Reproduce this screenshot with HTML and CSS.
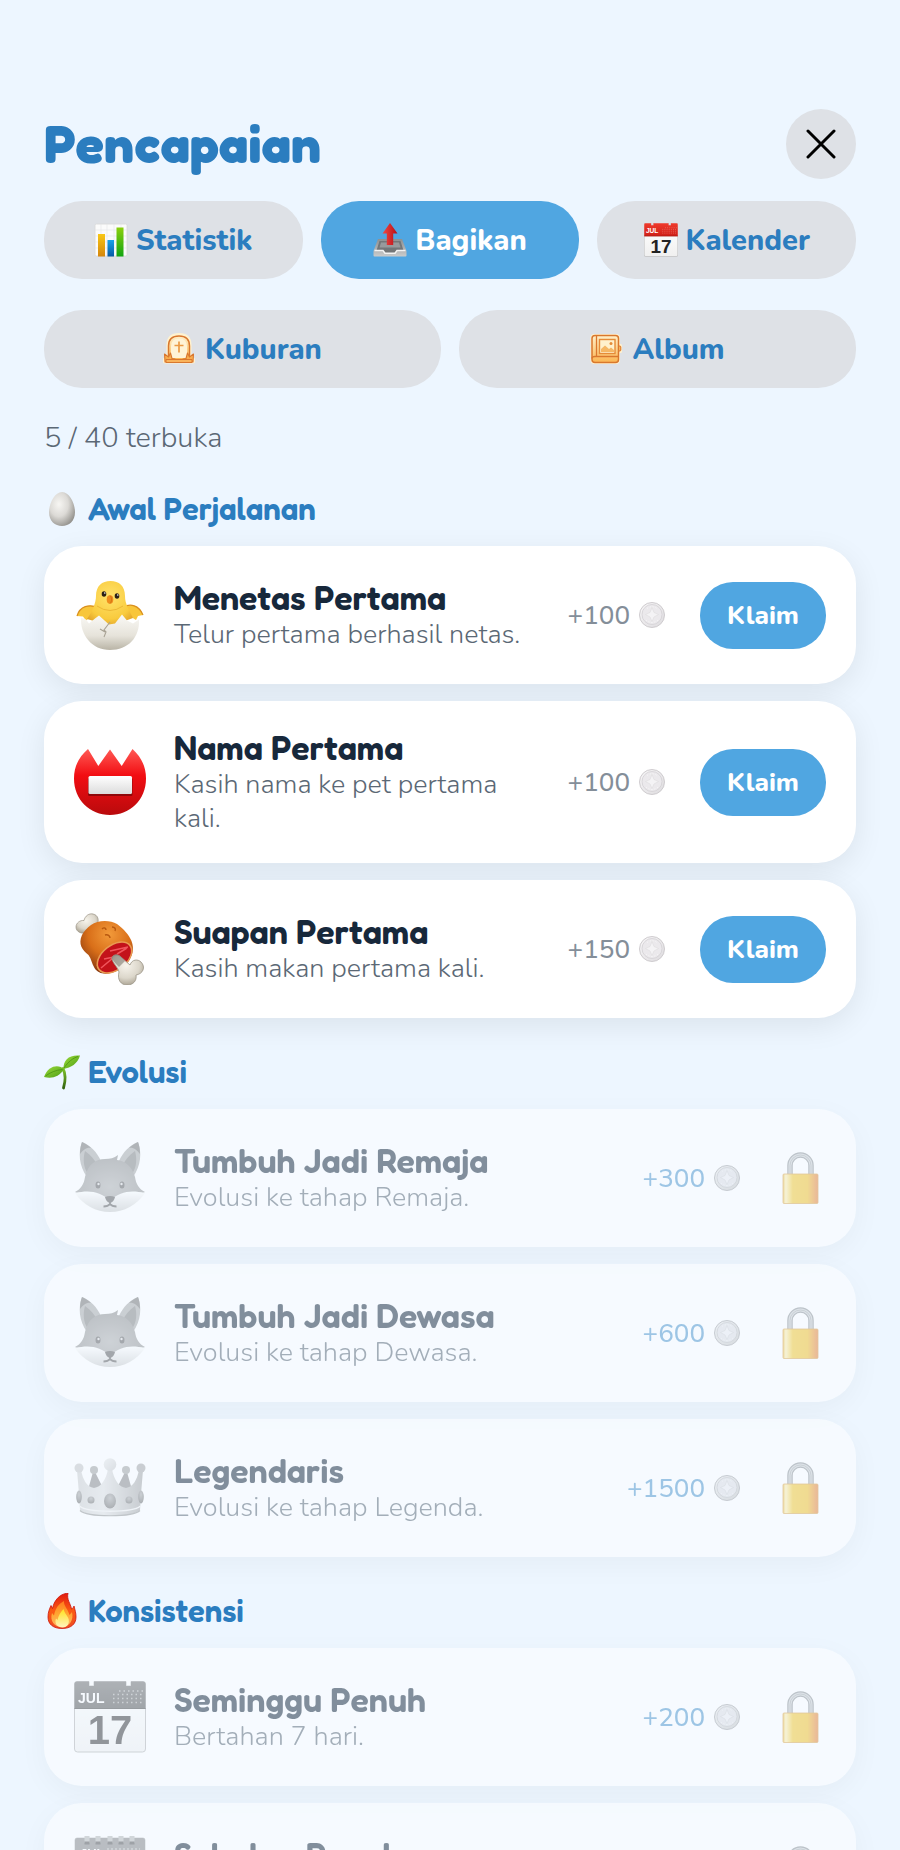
FILE: index.html
```html
<!DOCTYPE html>
<html lang="id">
<head>
<meta charset="utf-8">
<meta name="viewport" content="width=device-width, initial-scale=1">
<title>Pencapaian</title>
<link rel="stylesheet" href="styles.css">
</head>
<body>
<svg class="sprite" aria-hidden="true">
  <defs>
    <linearGradient id="gBarY" x1="0" y1="0" x2="0" y2="1"><stop offset="0" stop-color="#f8c715"/><stop offset="1" stop-color="#d5860d"/></linearGradient>
    <linearGradient id="gBarB" x1="0" y1="0" x2="0" y2="1"><stop offset="0" stop-color="#17a3ea"/><stop offset="1" stop-color="#0759a4"/></linearGradient>
    <linearGradient id="gBarG" x1="0" y1="0" x2="0" y2="1"><stop offset="0" stop-color="#8bd00c"/><stop offset="1" stop-color="#12a512"/></linearGradient>
    <linearGradient id="gArrow" x1="0" y1="0" x2="1" y2="0"><stop offset="0" stop-color="#f04a45"/><stop offset="1" stop-color="#b80d14"/></linearGradient>
    <linearGradient id="gTray" x1="0" y1="0" x2="0" y2="1"><stop offset="0" stop-color="#8d8f90"/><stop offset="1" stop-color="#c9cbcc"/></linearGradient>
    <linearGradient id="gRedTop" x1="0" y1="0" x2="0" y2="1"><stop offset="0" stop-color="#f03a2c"/><stop offset="1" stop-color="#cf1f17"/></linearGradient>
    <linearGradient id="gPaper" x1="0" y1="0" x2="0" y2="1"><stop offset="0" stop-color="#ffffff"/><stop offset="1" stop-color="#f0f0f0"/></linearGradient>
    <linearGradient id="gAmber" x1="0" y1="0" x2="0" y2="1"><stop offset="0" stop-color="#fff0c9"/><stop offset="1" stop-color="#fbb552"/></linearGradient>
    <radialGradient id="gEgg" cx=".38" cy=".36" r=".72"><stop offset="0" stop-color="#f7f6f3"/><stop offset=".5" stop-color="#dcdad6"/><stop offset="1" stop-color="#8f8d88"/></radialGradient>
    <radialGradient id="gChick" cx=".5" cy=".35" r=".7"><stop offset="0" stop-color="#ffe26a"/><stop offset=".7" stop-color="#f9cb3e"/><stop offset="1" stop-color="#e0a028"/></radialGradient>
    <linearGradient id="gShell" x1="0" y1="0" x2="0" y2="1"><stop offset="0" stop-color="#faf9f6"/><stop offset=".6" stop-color="#e6e3da"/><stop offset="1" stop-color="#b9b4a6"/></linearGradient>
    <linearGradient id="gBadge" x1="0" y1="0" x2="0" y2="1"><stop offset="0" stop-color="#ff5a55"/><stop offset=".4" stop-color="#f20d12"/><stop offset="1" stop-color="#b90a0c"/></linearGradient>
    <linearGradient id="gPlate" x1="0" y1="0" x2="0" y2="1"><stop offset="0" stop-color="#ffffff"/><stop offset="1" stop-color="#dcdcdc"/></linearGradient>
    <radialGradient id="gMeat" cx=".55" cy=".25" r=".8"><stop offset="0" stop-color="#f29a3a"/><stop offset=".5" stop-color="#d96f19"/><stop offset="1" stop-color="#7c2f0c"/></radialGradient>
    <radialGradient id="gBone" cx=".45" cy=".35" r=".7"><stop offset="0" stop-color="#f7f4ec"/><stop offset=".6" stop-color="#dcd7cb"/><stop offset="1" stop-color="#a59d8c"/></radialGradient>
    <linearGradient id="gLeaf" x1="0" y1="0" x2="1" y2="1"><stop offset="0" stop-color="#9bdc3a"/><stop offset="1" stop-color="#4c9c14"/></linearGradient>
    <linearGradient id="gStem" x1="0" y1="0" x2="0" y2="1"><stop offset="0" stop-color="#7fc32b"/><stop offset="1" stop-color="#34640f"/></linearGradient>
    <linearGradient id="gFlame" x1="0" y1="0" x2="0" y2="1"><stop offset="0" stop-color="#e01a10"/><stop offset=".5" stop-color="#fb5a12"/><stop offset="1" stop-color="#ee4d22"/></linearGradient>
    <linearGradient id="gFlameIn" x1="0" y1="0" x2="0" y2="1"><stop offset="0" stop-color="#ff7a1c"/><stop offset=".5" stop-color="#ffa631"/><stop offset="1" stop-color="#ffb765"/></linearGradient>
    <linearGradient id="gFlameCore" x1="0" y1="0" x2="0" y2="1"><stop offset="0" stop-color="#ffe21c"/><stop offset="1" stop-color="#fff3c0"/></linearGradient>
    <radialGradient id="gFox" cx=".5" cy=".6" r=".6"><stop offset="0" stop-color="#a8a8a8"/><stop offset="1" stop-color="#808080"/></radialGradient>
    <linearGradient id="gFoxLow" x1="0" y1="0" x2="0" y2="1"><stop offset="0" stop-color="#ffffff"/><stop offset="1" stop-color="#c6c6c6"/></linearGradient>
    <linearGradient id="gCrown" x1="0" y1="0" x2="1" y2="0"><stop offset="0" stop-color="#c9c9c9"/><stop offset=".4" stop-color="#dedede"/><stop offset="1" stop-color="#9b9b9b"/></linearGradient>
    <radialGradient id="gGem" cx=".5" cy=".3" r=".7"><stop offset="0" stop-color="#a4a4a4"/><stop offset="1" stop-color="#5b5b5b"/></radialGradient>
    <linearGradient id="gGold" x1="0" y1="0" x2="1" y2="0"><stop offset="0" stop-color="#f0c040"/><stop offset=".08" stop-color="#fff0b0"/><stop offset=".28" stop-color="#f4c82c"/><stop offset=".7" stop-color="#f3c126"/><stop offset="1" stop-color="#e87834"/></linearGradient>
    <linearGradient id="gCoin" x1="0" y1="0" x2="1" y2="1"><stop offset="0" stop-color="#f9f8f9"/><stop offset="1" stop-color="#dddbde"/></linearGradient>
    <linearGradient id="gCoinDark" x1="0" y1="0" x2="1" y2="1"><stop offset="0" stop-color="#ebebeb"/><stop offset="1" stop-color="#c2c2c2"/></linearGradient>
  </defs>

  <symbol id="i-chart" viewBox="0 0 34 34">
    <rect x="1" y="1" width="32" height="32" rx="1.500" fill="#fbfbfb" stroke="#d8d8d8" stroke-width=".8"/>
    <path d="M1 7h32M1 13h32M1 19h32M1 25h32M7 1v32M13 1v32M20 1v32M27 1v32" stroke="#e4e6e8" stroke-width=".6"/>
    <rect x="4" y="11" width="7" height="22.500" fill="url(#gBarY)"/>
    <rect x="13.500" y="17" width="6.500" height="16.500" fill="url(#gBarB)"/>
    <rect x="22.500" y="4.500" width="7" height="29" fill="url(#gBarG)"/>
  </symbol>

  <symbol id="i-share" viewBox="0 0 34 34">
    <path d="M5 16h24l4.500 12v4.500q0 1-1 1h-31q-1 0-1-1V28z" fill="url(#gTray)"/>
    <path d="M6.500 18h21l3 9.500h-6.500l-2 2.500h-10l-2-2.500H3.500z" fill="#737678"/>
    <path d="M8 19.500h18l1.500 5H6.500z" fill="#979a9c"/>
    <path d="M1.500 27.500h8.500l2 2.700h10l2-2.700h8.500" fill="none" stroke="#f3f4f4" stroke-width="1.500"/>
    <path d="M17 0l7.500 10.500h-4.300V22h-6.400V10.500H9.500z" fill="url(#gArrow)"/>
  </symbol>

  <symbol id="i-calendar" viewBox="0 0 72 72">
    <path d="M3 .5h12v4.500h5V.5h32v4.500h5V.5h12q2.500 0 2.500 2.500v65q0 3-3 3H3.500q-3 0-3-3V3Q.5.5 3 .5z" fill="url(#gPaper)" stroke="#aaa" stroke-width="1"/>
    <path d="M3 .5h12v4.500h5V.5h32v4.500h5V.5h12q2.500 0 2.500 2.500v25H.5V3Q.5.5 3 .5z" fill="url(#gRedTop)"/>
    <path d="M.5 27.500h71" stroke="#8f1712" stroke-width="1"/>
    <path d="M39 13.500h30M39 17.500h30M39 21.500h30M45 10h24" stroke="#fff" stroke-opacity=".5" stroke-width="1.300" stroke-dasharray="1.500 3"/>
    <text x="4" y="22" font-family="Liberation Sans, sans-serif" font-size="14" font-weight="700" fill="#fff">JUL</text>
    <text x="36" y="63" text-anchor="middle" font-family="Liberation Sans, sans-serif" font-size="40" font-weight="700" fill="#222">17</text>
  </symbol>

  <symbol id="i-grave" viewBox="0 0 32 32">
    <path d="M6 28V12q0-9.500 10-9.500T26 12v16" fill="none" stroke="#fff2cf" stroke-width="5"/>
    <path d="M2.500 27.500h27" stroke="#fff2cf" stroke-width="6" stroke-linecap="round"/>
    <path d="M5.500 27V13Q5.500 3 16 3t10.500 10v14z" fill="url(#gAmber)" stroke="#d9772e" stroke-width="1.500"/>
    <path d="M8 25V13.500Q8 5.500 16 5.500t8 8V25" fill="#fff3d6"/>
    <path d="M16 8.500v11M11.500 12.500h9" stroke="#eb9a45" stroke-width="1.700"/>
    <path d="M2 29l-.5-8 4 3 2-4 1.500 5.500 3 .5-1 3zM30 29l.5-8-4 3-2-4-1.500 5.500-3 .5 1 3z" fill="#f9ad4e" stroke="#d9772e" stroke-width="1.100" stroke-linejoin="round"/>
    <path d="M3 26.500h26v3H3z" fill="#f9b25a" stroke="#d9772e" stroke-width="1"/>
  </symbol>

  <symbol id="i-album" viewBox="0 0 32 32">
    <rect x=".5" y="1" width="29.500" height="30" rx="4" fill="#fff2cf"/>
    <rect x="28" y="11" width="4" height="9" rx="1.500" fill="#fff2cf"/>
    <path d="M5 2.500h20.500q3 0 3 3v21q0 3-3 3H5q-3 0-3-3v-21q0-3 3-3z" fill="url(#gAmber)" stroke="#d9772e" stroke-width="1.500"/>
    <path d="M6.500 3v20.500M2 25.500q0-2 3-2h23.500" fill="none" stroke="#d9772e" stroke-width="1.300"/>
    <rect x="9.500" y="6.500" width="15.500" height="14" fill="#fff1cd" stroke="#e58b38" stroke-width="1.400"/>
    <path d="M11 19v-3l4-3.500 4 3.500 2-1.500 3 2.500v2z" fill="#f5b765"/>
    <circle cx="21" cy="10.500" r="1.500" fill="#e58b38"/>
    <rect x="28.500" y="13" width="2.300" height="5" rx="1" fill="#f9b25a" stroke="#d9772e"/>
  </symbol>

  <symbol id="i-egg" viewBox="0 0 36 36">
    <path d="M18 1C25.500 1 31 13 31 21c0 9-6 14-13 14S5 30 5 21C5 13 10.500 1 18 1z" fill="url(#gEgg)"/>
  </symbol>

  <symbol id="i-sprout" viewBox="0 0 36 36">
    <path d="M19 14.500c2.500 5 3 11 .5 19.500" fill="none" stroke="url(#gStem)" stroke-width="2.800" stroke-linecap="round"/>
    <path d="M19.500 15C19 6 25 .5 36 1.500 33.500 10 27 13.500 19.500 15z" fill="url(#gLeaf)"/>
    <path d="M20 15C15 10 4 11 0 23c8 2 15 0 20-8z" fill="url(#gLeaf)"/>
    <path d="M20 14C24 8 29 4 34 2.500M18.500 15.500C12 16 6 18.500 1.500 22" fill="none" stroke="#4a9312" stroke-width=".8"/>
  </symbol>

  <symbol id="i-flame" viewBox="0 0 36 36">
    <path d="M24 0c-1.500 7 2.500 10 3.500 16 1.500-.5 2-2 2.500-3C31 17 32 20 32 24c0 7.500-5.500 11.500-14 11.500S4 31.500 4 24c0-5 1.500-8 3-11.500.7 1 1 2 1.500 3C10 8 15 1 24 0z" fill="url(#gFlame)" stroke="#cc140c" stroke-width=".8"/>
    <path d="M20 8c-.5 5 4 8 5.500 14l2.500-3c2 8-2.500 15-10 15S5.500 28 8 20l2 2.500C11.500 15 14.500 11 20 8z" fill="url(#gFlameIn)"/>
    <path d="M19.500 16c1 4 2.500 5 4.500 8.500 2.500 5-.5 10-5.500 10s-8.500-4-6.500-9c.6.500 1 1 1.500 1.500 1-5 3-7.500 6-11z" fill="url(#gFlameCore)"/>
  </symbol>

  <symbol id="i-chick" viewBox="0 0 72 72">
    <path d="M25 29C16 24 6 27 3 37l6 .5 3 4 4-3h42l4 2.500 2-4 5-1C66 26 57 24 48 29z" fill="#f8c63a"/>
    <path d="M3 37C6 27 15 25 24 28.500M69 36C65 26 56 24 49 28.500" fill="none" stroke="#d98f1e" stroke-width="1.200"/>
    <path d="M22 17C22 7 28 2 36.500 2S51 7 51 17c0 8 4 14 8 22l-22 8-24-7c5-7 9-16 9-23z" fill="url(#gChick)"/>
    <path d="M23 27q13 9 26 0" fill="none" stroke="#e5ab2b" stroke-width="1" opacity=".7"/>
    <path d="M7 38.500l5 2 3 4 6-5 4-3 10 9 6-1 7-9 5 6 6 3 6-4c1 18-11 30.500-29 30.500S6 56 7 38.500z" fill="url(#gShell)"/>
    <path d="M36 43l-6 8 2 2-2 5M31 53l-5-3" fill="none" stroke="#a8a294" stroke-width="1.100"/>
    <ellipse cx="30" cy="15" rx="2.300" ry="2.800" fill="#2b2016"/><ellipse cx="43" cy="17" rx="2.300" ry="2.800" fill="#2b2016"/>
    <circle cx="30.800" cy="14" r=".8" fill="#fff"/><circle cx="43.800" cy="16" r=".8" fill="#fff"/>
    <ellipse cx="36" cy="20.500" rx="3.300" ry="4.200" fill="#ef8d1c"/><path d="M36 16.500c2 2 2 6 0 8" fill="none" stroke="#c86810" stroke-width=".8"/>
  </symbol>

  <symbol id="i-badge" viewBox="0 0 72 72">
    <path d="M14 3l10.300 17L36 3.500 47.700 20 58.500 3C67 11 72 20 72 32.500 72 54 56 69 36 69S0 54 0 32.500C0 20 5 11 14 3z" fill="url(#gBadge)"/>
    <rect x="14" y="32" width="44.500" height="18" rx="1.500" fill="#8f0709"/>
    <rect x="14.500" y="30" width="43.500" height="18" rx="1.500" fill="url(#gPlate)"/>
  </symbol>

  <symbol id="i-meat" viewBox="0 0 72 72">
    <path d="M2 14c0-4 4-7 8-6.500C11 3 15 0 19 1c5 1 6.500 6 4 11l-8 7C8 22 2 19 2 14z" fill="url(#gBone)" stroke="#9b9486" stroke-width=".7"/>
    <path d="M17 12C24 7 36 7 43 11c7 5 12 11 14.500 17 3 8 1 15-3.500 21-4 6-10 9-17 11-7 1.500-13 .5-16.500-5-3-5-3-9-6-13C8 37 4 31 8 22c2-4 5-7 9-10z" fill="url(#gMeat)"/>
    <ellipse cx="40.500" cy="44.500" rx="20.500" ry="13" transform="rotate(-38 40.500 44.500)" fill="#e99a52"/>
    <ellipse cx="40.500" cy="44.500" rx="18.800" ry="11.500" transform="rotate(-38 40.500 44.500)" fill="#c3121a"/>
    <path d="M27 55l12-10M30 46l10-2M36 38l18-4M43 41l10-6" stroke="#f0555c" stroke-width="1.600" fill="none"/>
    <path d="M28 16c2-2 4-1 4 1M38 14c3 0 4 2 3 4M31 22c3-1 5 1 5 3" fill="none" stroke="#b8580f" stroke-width="1.400"/>
    <path d="M38 45c1-4 6-4 9-1l9 8c2-6 8-6 11-3 5 5 2 12-5 13 1 6-3 10-9 10s-10-5-8-13c-1-5-7-9-7-14z" fill="url(#gBone)" stroke="#9b9486" stroke-width=".8"/>
    <path d="M38 45c1-4 6-4 9-1l4 4-6 6c-3-3-6-6-7-9z" fill="#5d5850" opacity=".45"/>
  </symbol>

  <symbol id="i-fox" viewBox="0 0 72 72">
    <path d="M8 0C16 3 23 10 27 19L13 35C5 24 4 10 8 0zM64 0C56 3 49 10 45 19l14 16C67 24 68 10 64 0z" fill="#a0a0a0"/>
    <path d="M8 0c4 2 7 4 9 6-4-1-8 2-11 6C6 8 6.500 4 8 0zM64 0c-4 2-7 4-9 6 4-1 8 2 11 6 0-4-.5-8-2-12z" fill="#666"/>
    <path d="M11 9c6 4 10 9 12 14l-9 9C9 25 9 16 11 9zM61 9c-6 4-10 9-12 14l9 9c5-7 5-16 3-23z" fill="#767676"/>
    <path d="M11 35C14 22 22 17 31 17c5 0 9-1 13-4l-1 5C52 19 58 25 61 35c1 7 4 12 10 15L36 66 1 50c6-3 9-8 10-15z" fill="url(#gFox)"/>
    <path d="M1 51c14-3 25-2 35 8 10-10 21-11 35-8C63 63 50 70 36 70S9 63 1 51z" fill="url(#gFoxLow)"/>
    <ellipse cx="24" cy="43" rx="2.500" ry="3.500" fill="#4c4c4c"/><ellipse cx="48" cy="43" rx="2.500" ry="3.500" fill="#4c4c4c"/>
    <circle cx="24.500" cy="42" r="1.200" fill="#ddd"/><circle cx="47.500" cy="42" r="1.200" fill="#ddd"/>
    <path d="M31 55q5-2 10 0-1 5-5 6-4-1-5-6z" fill="#484848"/>
    <path d="M36 60v2q-2 2.500-6.500 2.500M36 62q2 2.500 6.500 2.500" fill="none" stroke="#484848" stroke-width="1.800"/>
  </symbol>

  <symbol id="i-crown" viewBox="0 0 72 72">
    <path d="M14 38l5-18h2l7 14-8 8zM58 38l-5-18h-2l-7 14 8 8z" fill="#7c7c7c"/>
    <path d="M3 18h4c2 10 6 17 13 18 7-1 12-8 14-19h4c2 11 7 18 14 19 7-1 11-8 13-18h4l-2 24-1 16c-7 8-53 8-60 0L5 42z" fill="url(#gCrown)"/>
    <path d="M5.500 54c8 7 53 7 61 0" fill="none" stroke="#f0f0f0" stroke-width="1.500"/>
    <path d="M6 58.500c7 7 53 7 60 0" fill="none" stroke="#8a8a8a" stroke-width="1.200"/>
    <circle cx="5" cy="16" r="4.500" fill="#c0c0c0"/><circle cx="67" cy="16" r="4.500" fill="#9d9d9d"/>
    <circle cx="20" cy="18" r="4" fill="#979797"/><circle cx="52" cy="18" r="4" fill="#979797"/>
    <circle cx="36" cy="12.500" r="6.300" fill="url(#gCoinDark)"/>
    <ellipse cx="36" cy="49" rx="6" ry="7.500" fill="url(#gGem)"/>
    <circle cx="17" cy="48" r="3.500" fill="url(#gGem)"/><circle cx="55" cy="48" r="3.500" fill="url(#gGem)"/>
    <ellipse cx="5" cy="45" rx="2.800" ry="6.500" fill="url(#gGem)"/><ellipse cx="67" cy="45" rx="2.800" ry="6.500" fill="url(#gGem)"/>
  </symbol>

  <symbol id="i-spiral" viewBox="0 0 72 72">
    <rect x="1" y="2" width="70" height="69" rx="2" fill="url(#gPaper)" stroke="#bbb"/>
    <path d="M3 2h66q2 0 2 2v22H1V4q0-2 2-2z" fill="#7a7a7a"/>
    <path d="M13 0v7M24 0v7M36 0v7M47 0v7M58 0v7" stroke="#b0b0b0" stroke-width="5"/>
    <path d="M10.500 7h5M21.500 7h5M33.500 7h5M44.500 7h5M55.500 7h5" stroke="#3f3f3f" stroke-width="3"/>
    <path d="M33 13h33M33 17h33M33 21h33" stroke="#ccc" stroke-width="1.200" stroke-dasharray="2 2"/>
    <text x="6" y="22" font-family="Liberation Sans, sans-serif" font-size="13" font-weight="700" fill="#fff">JUL</text>
  </symbol>

  <symbol id="i-coin" viewBox="0 0 26 26">
    <circle cx="13" cy="13" r="12.500" fill="url(#gCoin)" stroke="#c9c6ca" stroke-width=".9"/>
    <circle cx="13" cy="12.500" r="10" fill="#ebe9ec" stroke="#d3d0d4" stroke-width=".8"/>
    <path d="M13 5.500l2 5 4.500 2-4.500 2.500-2 4.500-2-4.500L6.500 12.500l4.500-2z" fill="#f4f3f5" stroke="#dddbde" stroke-width=".6"/>
    <path d="M8 6.500q5-3.500 10 0M7 18q6 5 12 0" fill="none" stroke="#fbfbfb" stroke-width="1" stroke-dasharray="1 2"/>
  </symbol>

  <symbol id="i-coin-dark" viewBox="0 0 26 26">
    <circle cx="13" cy="13" r="12.500" fill="url(#gCoinDark)" stroke="#a2a2a6" stroke-width="1"/>
    <circle cx="13" cy="12.500" r="10" fill="#dedee2" stroke="#b6b6ba" stroke-width=".8"/>
    <path d="M13 5.500l2 5 4.500 2-4.500 2.500-2 4.500-2-4.500L6.500 12.500l4.500-2z" fill="#ececf0" stroke="#c6c6ca" stroke-width=".6"/>
    <path d="M8 6.500q5-3.500 10 0M7 18q6 5 12 0" fill="none" stroke="#f4f4f4" stroke-width="1" stroke-dasharray="1 2"/>
  </symbol>

  <symbol id="i-lock" viewBox="0 0 36 52">
    <path d="M7.500 24V13.500a10.500 10.500 0 0 1 21 0V24" fill="none" stroke="#8e9296" stroke-width="5.500"/>
    <path d="M7.500 24V13.500a10.500 10.500 0 0 1 21 0V24" fill="none" stroke="#cdd0d2" stroke-width="3"/>
    <path d="M7.500 24V13.500a10.500 10.500 0 0 1 21 0V24" fill="none" stroke="#9fa3a6" stroke-width=".8"/>
    <rect x=".5" y="22" width="35" height="29.500" rx="1" fill="url(#gGold)" stroke="#d59a3c" stroke-width=".8"/>
  </symbol>
</svg>

<main class="screen">
  <header class="header">
    <h1 class="title">Pencapaian</h1>
    <button class="close" type="button" aria-label="Tutup">
      <svg class="close-icon" viewBox="0 0 30 30" aria-hidden="true"><path d="M2 2l26 26M28 2L2 28"/></svg>
    </button>
  </header>

  <nav class="tabs" aria-label="Menu pencapaian">
    <div class="tab-row">
      <button class="tab" type="button"><svg class="tab-icon" aria-hidden="true"><use href="#i-chart"/></svg>Statistik</button>
      <button class="tab tab-active" type="button"><svg class="tab-icon" aria-hidden="true"><use href="#i-share"/></svg>Bagikan</button>
      <button class="tab" type="button"><svg class="tab-icon" aria-hidden="true"><use href="#i-calendar"/></svg>Kalender</button>
    </div>
    <div class="tab-row">
      <button class="tab tab-wide" type="button"><svg class="tab-icon" aria-hidden="true"><use href="#i-grave"/></svg>Kuburan</button>
      <button class="tab tab-wide" type="button"><svg class="tab-icon" aria-hidden="true"><use href="#i-album"/></svg>Album</button>
    </div>
  </nav>

  <p class="progress">5 / 40 terbuka</p>

  <section class="group">
    <h2 class="group-title"><svg class="group-icon" aria-hidden="true"><use href="#i-egg"/></svg>Awal Perjalanan</h2>
    <ul class="cards">
      <li class="card">
        <svg class="card-icon" aria-hidden="true"><use href="#i-chick"/></svg>
        <div class="card-text"><h3 class="card-title">Menetas Pertama</h3><p class="card-desc">Telur pertama berhasil netas.</p></div>
        <span class="reward">+100<svg class="coin" aria-hidden="true"><use href="#i-coin"/></svg></span>
        <button class="claim" type="button">Klaim</button>
      </li>
      <li class="card">
        <svg class="card-icon" aria-hidden="true"><use href="#i-badge"/></svg>
        <div class="card-text"><h3 class="card-title">Nama Pertama</h3><p class="card-desc">Kasih nama ke pet pertama kali.</p></div>
        <span class="reward">+100<svg class="coin" aria-hidden="true"><use href="#i-coin"/></svg></span>
        <button class="claim" type="button">Klaim</button>
      </li>
      <li class="card">
        <svg class="card-icon" aria-hidden="true"><use href="#i-meat"/></svg>
        <div class="card-text"><h3 class="card-title">Suapan Pertama</h3><p class="card-desc">Kasih makan pertama kali.</p></div>
        <span class="reward">+150<svg class="coin" aria-hidden="true"><use href="#i-coin"/></svg></span>
        <button class="claim" type="button">Klaim</button>
      </li>
    </ul>
  </section>

  <section class="group">
    <h2 class="group-title"><svg class="group-icon" aria-hidden="true"><use href="#i-sprout"/></svg>Evolusi</h2>
    <ul class="cards">
      <li class="card locked">
        <svg class="card-icon" aria-hidden="true"><use href="#i-fox"/></svg>
        <div class="card-text"><h3 class="card-title">Tumbuh Jadi Remaja</h3><p class="card-desc">Evolusi ke tahap Remaja.</p></div>
        <span class="reward">+300<svg class="coin" aria-hidden="true"><use href="#i-coin-dark"/></svg></span>
        <svg class="lock" role="img" aria-label="Terkunci"><use href="#i-lock"/></svg>
      </li>
      <li class="card locked">
        <svg class="card-icon" aria-hidden="true"><use href="#i-fox"/></svg>
        <div class="card-text"><h3 class="card-title">Tumbuh Jadi Dewasa</h3><p class="card-desc">Evolusi ke tahap Dewasa.</p></div>
        <span class="reward">+600<svg class="coin" aria-hidden="true"><use href="#i-coin-dark"/></svg></span>
        <svg class="lock" role="img" aria-label="Terkunci"><use href="#i-lock"/></svg>
      </li>
      <li class="card locked">
        <svg class="card-icon" aria-hidden="true"><use href="#i-crown"/></svg>
        <div class="card-text"><h3 class="card-title">Legendaris</h3><p class="card-desc">Evolusi ke tahap Legenda.</p></div>
        <span class="reward">+1500<svg class="coin" aria-hidden="true"><use href="#i-coin-dark"/></svg></span>
        <svg class="lock" role="img" aria-label="Terkunci"><use href="#i-lock"/></svg>
      </li>
    </ul>
  </section>

  <section class="group">
    <h2 class="group-title"><svg class="group-icon" aria-hidden="true"><use href="#i-flame"/></svg>Konsistensi</h2>
    <ul class="cards">
      <li class="card locked">
        <svg class="card-icon" aria-hidden="true"><use href="#i-calendar"/></svg>
        <div class="card-text"><h3 class="card-title">Seminggu Penuh</h3><p class="card-desc">Bertahan 7 hari.</p></div>
        <span class="reward">+200<svg class="coin" aria-hidden="true"><use href="#i-coin-dark"/></svg></span>
        <svg class="lock" role="img" aria-label="Terkunci"><use href="#i-lock"/></svg>
      </li>
      <li class="card locked">
        <svg class="card-icon" aria-hidden="true"><use href="#i-spiral"/></svg>
        <div class="card-text"><h3 class="card-title">Sebulan Penuh</h3><p class="card-desc">Bertahan 30 hari.</p></div>
        <span class="reward">+800<svg class="coin" aria-hidden="true"><use href="#i-coin-dark"/></svg></span>
        <svg class="lock" role="img" aria-label="Terkunci"><use href="#i-lock"/></svg>
      </li>
    </ul>
  </section>
</main>
</body>
</html>
```
FILE: styles.css
```css
:root {
  --bg: #edf6ff;
  --blue: #2b7dbf;
  --sky: #50a6e1;
  --ink: #17283b;
  --muted: #5b6875;
  --pill: #dee1e6;
  --body: Nunito, Lato, "Open Sans", sans-serif;
  --display: Fredoka, Lato, "Open Sans", sans-serif;
}

* {
  box-sizing: border-box;
  margin: 0;
  padding: 0;
}

body {
  background: var(--bg);
  color: var(--ink);
  font-family: var(--body);
}

button {
  border: 0;
  font-family: inherit;
  cursor: pointer;
}

.sprite {
  position: absolute;
  width: 0;
  height: 0;
}

.screen {
  height: 100vh;
  overflow-y: auto;
  scrollbar-width: none;
  padding: 109px 44px 44px;
}

.header {
  display: flex;
  align-items: center;
  justify-content: space-between;
}

.title {
  font-family: var(--display);
  font-size: 53px;
  font-weight: 700;
  line-height: 70px;
  color: var(--blue);
}

.close {
  display: flex;
  align-items: center;
  justify-content: center;
  width: 70px;
  height: 70px;
  border-radius: 50%;
  background: var(--pill);
}

.close-icon {
  width: 30px;
  height: 30px;
  fill: none;
  stroke: #000;
  stroke-width: 3;
  stroke-linecap: round;
}

.tabs {
  display: grid;
  gap: 31px;
  margin-top: 22px;
}

.tab-row {
  display: flex;
  gap: 18px;
}

.tab {
  flex: 1 1 0;
  display: flex;
  align-items: center;
  justify-content: center;
  gap: 8px;
  height: 78px;
  border-radius: 38px;
  background: var(--pill);
  color: var(--blue);
  font-size: 29px;
  font-weight: 800;
}

.tab-active {
  background: var(--sky);
  color: #fff;
}

.tab-icon {
  width: 34px;
  height: 34px;
}

.tab-wide {
  gap: 10px;
}

.tab-wide .tab-icon {
  width: 32px;
  height: 32px;
}

.progress {
  margin-top: 31px;
  font-size: 29px;
  font-weight: 300;
  line-height: 38px;
  color: var(--muted);
}

.group {
  padding-top: 32px;
}

.group-title {
  display: flex;
  align-items: center;
  gap: 8px;
  margin-bottom: 17px;
  font-family: var(--display);
  font-size: 31px;
  font-weight: 600;
  line-height: 40px;
  color: var(--blue);
}

.group-icon {
  width: 36px;
  height: 36px;
}

.cards {
  display: grid;
  gap: 17px;
  padding-bottom: 2px;
  list-style: none;
}

.card {
  display: flex;
  align-items: center;
  padding: 27px 30px;
  border-radius: 38px;
  background: #fff;
  box-shadow: 0 8px 30px rgba(0, 0, 0, 0.08);
}

.card-icon {
  flex: none;
  width: 72px;
  height: 72px;
  margin: 6px 28px 6px 0;
}

.card-text {
  flex: 1;
  min-width: 0;
}

.card-title {
  font-family: var(--display);
  font-size: 34px;
  font-weight: 600;
  line-height: 40px;
}

.card-desc {
  font-size: 27px;
  font-weight: 300;
  line-height: 34px;
  color: var(--muted);
}

.reward {
  display: flex;
  align-items: center;
  gap: 9px;
  margin: 0 35px 0 24px;
  font-size: 26px;
  font-weight: 500;
  color: #848e99;
}

.coin {
  width: 26px;
  height: 26px;
}

.claim {
  height: 67px;
  min-width: 126px;
  padding: 0 26px;
  border-radius: 33px;
  background: var(--sky);
  color: #fff;
  font-size: 26px;
  font-weight: 800;
}

.lock {
  width: 51px;
  height: 52px;
}

.locked {
  opacity: 0.5;
}

.locked .card-icon {
  filter: grayscale(1);
  opacity: 0.9;
}

.locked .reward {
  color: #4f96cc;
}
```
